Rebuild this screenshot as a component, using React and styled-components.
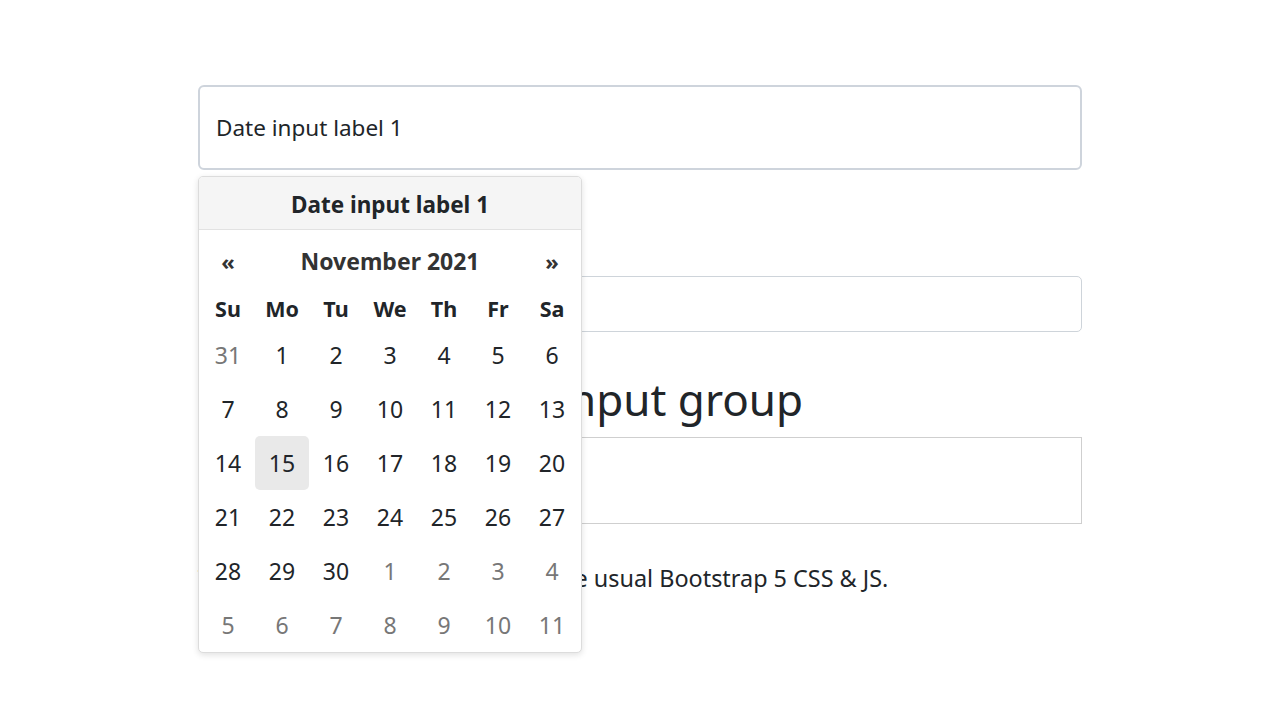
import React from 'react';
import styled, { createGlobalStyle } from 'styled-components';

const GlobalStyle = createGlobalStyle`
  html, body {
    margin: 0;
    padding: 0;
    background: #fff;
    font-family: "Noto Sans", "Open Sans", sans-serif;
    color: #212529;
  }
  #root { min-height: 100vh; }
  * { box-sizing: border-box; }
`;

const Page = styled.div`
  max-width: 884px;
  margin: 0 auto;
  padding-top: 85px;
`;

const Field = styled.div`
  position: relative;
`;

const BigInput = styled.input`
  display: block;
  width: 100%;
  height: 85px;
  padding: 0 16px;
  border: 2px solid #ced4dc;
  border-radius: 6px;
  font-family: inherit;
  font-size: 22.5px;
  color: #212529;
  background: #fff;
  outline: none;
`;

const Label = styled.label`
  display: block;
  margin: 73px 0 0;
  height: 33px;
  font-size: 22.5px;
`;

const Input = styled.input`
  display: block;
  width: 100%;
  height: 56px;
  padding: 0 16px;
  border: 1px solid #ced4da;
  border-radius: 5px;
  font-family: inherit;
  font-size: 22.5px;
  outline: none;
`;

const Heading = styled.h2`
  margin: 41px 0 11px;
  font-size: 44px;
  font-weight: 400;
  line-height: 1.2;
  white-space: nowrap;
`;

const SquareInput = styled(Input)`
  height: 87px;
  border-color: #cfcfcf;
  border-radius: 0;
`;

const Note = styled.p`
  margin: 38px 0 0;
  font-size: 23.4px;
  white-space: nowrap;
`;

const Picker = styled.div`
  position: absolute;
  top: calc(100% + 6px);
  left: 0;
  width: 384px;
  background: #fff;
  border: 1px solid #dcdcdc;
  border-radius: 5px;
  box-shadow: 0 2px 6px rgba(0, 0, 0, 0.12);
  overflow: hidden;
  z-index: 10;
`;

const PickerTitle = styled.div`
  height: 53px;
  padding-top: 2px;
  display: flex;
  align-items: center;
  justify-content: center;
  background: #f5f5f5;
  border-bottom: 1px solid #e2e2e2;
  font-size: 22.5px;
  font-weight: 700;
  color: #212529;
`;

const PickerBody = styled.div`
  padding: 4px 2px 0;
`;

const Grid = styled.div`
  display: grid;
  grid-template-columns: repeat(7, 54px);
`;

const NavRow = styled.div`
  display: grid;
  grid-template-columns: 54px 1fr 54px;
  height: 54px;
  align-items: center;
  text-align: center;
`;

const NavButton = styled.span`
  font-size: 22px;
  font-weight: 700;
  color: #333;
`;

const MonthTitle = styled.span`
  font-size: 23px;
  font-weight: 700;
  color: #333;
`;

const DayName = styled.div`
  height: 40px;
  display: flex;
  align-items: center;
  justify-content: center;
  font-size: 21.5px;
  font-weight: 700;
  color: #212529;
`;

const Day = styled.div`
  height: 54px;
  display: flex;
  align-items: center;
  justify-content: center;
  font-size: 23px;
  color: ${p => (p.$muted ? '#777' : '#212529')};
  background: ${p => (p.$active ? '#e9e9e9' : 'transparent')};
  border-radius: 5px;
`;

const dayNames = ['Su', 'Mo', 'Tu', 'We', 'Th', 'Fr', 'Sa'];

const days = [
  { d: 31, m: true },
  ...Array.from({ length: 30 }, (_, i) => ({ d: i + 1 })),
  ...Array.from({ length: 11 }, (_, i) => ({ d: i + 1, m: true })),
];

export default function App() {
  return (
    <>
      <GlobalStyle />
      <Page>
        <Field>
          <BigInput readOnly value="Date input label 1" />
          <Picker>
            <PickerTitle>Date input label 1</PickerTitle>
            <PickerBody>
              <NavRow>
                <NavButton>«</NavButton>
                <MonthTitle>November 2021</MonthTitle>
                <NavButton>»</NavButton>
              </NavRow>
              <Grid>
                {dayNames.map(n => (
                  <DayName key={n}>{n}</DayName>
                ))}
                {days.map((x, i) => (
                  <Day key={i} $muted={x.m} $active={!x.m && x.d === 15}>
                    {x.d}
                  </Day>
                ))}
              </Grid>
            </PickerBody>
          </Picker>
        </Field>
        <Label>Date input label 2</Label>
        <Input readOnly />
        <Heading>Date picker in an input group</Heading>
        <SquareInput readOnly />
        <Note>This example only ever requires the usual Bootstrap 5 CSS &amp; JS.</Note>
      </Page>
    </>
  );
}
